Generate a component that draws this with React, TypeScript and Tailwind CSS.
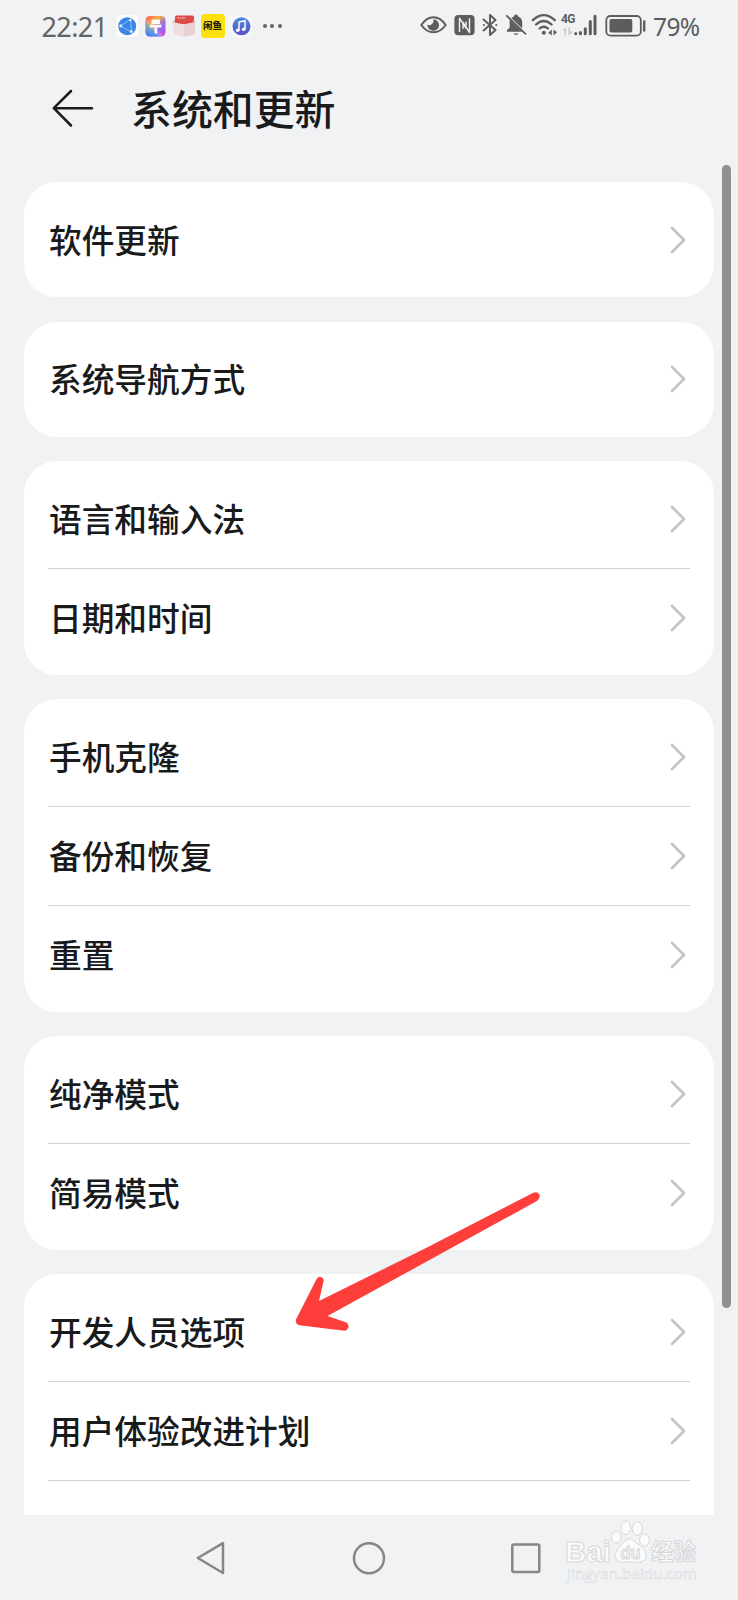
const groups = [
  ["软件更新"],
  ["系统导航方式"],
  ["语言和输入法", "日期和时间"],
  ["手机克隆", "备份和恢复", "重置"],
  ["纯净模式", "简易模式"],
  ["开发人员选项", "用户体验改进计划", ""],
];

function AppIcons() {
  return (
    <div className="flex items-center pt-[1px]">
      {/* globe */}
      <svg width="24" height="24" viewBox="0 0 24 24" className="ml-[7px]">
        <rect x="1" y="1" width="22" height="22" rx="5" fill="#fdfdfe" />
        <circle cx="12.2" cy="12.2" r="9" fill="#3b86e6" />
        <path d="M5.5 12 15.5 5.5 16.5 18ZM3.5 12h2M15.5 5.5 17 4M16.5 18l1.5 1.5" fill="none" stroke="#a9cdf7" strokeWidth="0.8" />
        <circle cx="5.8" cy="12" r="1.4" fill="#e8f2fd" />
        <circle cx="15.5" cy="6" r="1.2" fill="#e8f2fd" />
        <circle cx="16.3" cy="17.6" r="1.4" fill="#e8f2fd" />
      </svg>
      {/* themes */}
      <svg width="21" height="24" viewBox="0 0 21 24" className="ml-[6px]">
        <defs>
          <linearGradient id="warm" x1="0" y1="0" x2="1" y2="1">
            <stop offset="0" stopColor="#ff4f5e" />
            <stop offset="0.35" stopColor="#fbb03a" />
            <stop offset="0.65" stopColor="#8d6ef0" />
            <stop offset="1" stopColor="#e03fd8" />
          </linearGradient>
          <linearGradient id="cool" x1="0" y1="1" x2="0.9" y2="0.1">
            <stop offset="0" stopColor="#2a6cf5" />
            <stop offset="0.35" stopColor="#3fa8f8" stopOpacity="0.6" />
            <stop offset="0.55" stopColor="#fff" stopOpacity="0" />
          </linearGradient>
        </defs>
        <rect x="0.5" y="2" width="20" height="20.5" rx="4.5" fill="url(#warm)" />
        <rect x="0.5" y="2" width="20" height="20.5" rx="4.5" fill="url(#cool)" />
        <path d="M6.5 5.5h8.500v4.500H6.500ZM5 10.700h11.500v2.800H12.300v5.500q-1.400 1.500-2.800 0V13.500H5Z" fill="#fff" fillOpacity="0.94" />
      </svg>
      {/* parcel box */}
      <svg width="24" height="24" viewBox="0 0 24 24" className="ml-[6px]">
        <path d="M3 10V3q0-1.500 1.500-1.500h16Q22 1.500 22 3v7Z" fill="#db4a49" />
        <path d="M5.500 4h8" stroke="#f7b6b4" strokeWidth="1.400" strokeDasharray="1.500 0.800" />
        <path d="M0.500 8 12 10.500 23.500 8 22.500 20.500 12 22.500 1.500 20.500Z" fill="#efdede" />
        <path d="M12 10.500 23.500 8 22.500 20.500 12 22.500Z" fill="#e9d0d1" />
        <path d="M0.500 8 3 5.500V8.600Z M23.500 8 21.500 5.500V8.600Z" fill="#e2a5a5" />
      </svg>
      <div className="ml-[5px] flex h-[24px] w-[24px] items-center justify-center rounded-[4px] bg-[#fde10f]">
        <span className="whitespace-nowrap text-[9.500px] leading-none font-black text-[#26230c]">闲鱼</span>
      </div>
      {/* music */}
      <svg width="22" height="24" viewBox="0 0 22 24" className="ml-[5px]">
        <defs>
          <linearGradient id="note" x1="0" y1="0" x2="0" y2="1">
            <stop offset="0" stopColor="#4c8ae0" />
            <stop offset="1" stopColor="#5b50c8" />
          </linearGradient>
        </defs>
        <rect x="0" y="1.500" width="22" height="22" rx="5" fill="#f8f8fb" />
        <circle cx="11.500" cy="12.300" r="9" fill="url(#note)" />
        <path d="M9 16.500V8l6-1.300v8.500" fill="none" stroke="#fff" strokeWidth="1.500" />
        <circle cx="7.700" cy="16.300" r="1.800" fill="#fff" />
        <circle cx="13.700" cy="15.200" r="1.800" fill="#fff" />
      </svg>
      <div className="ml-[11px] flex gap-[3.500px]">
        <i className="size-[4px] rounded-full bg-[#636466]" />
        <i className="size-[4px] rounded-full bg-[#636466]" />
        <i className="size-[4px] rounded-full bg-[#636466]" />
      </div>
    </div>
  );
}

function SystemIcons() {
  return (
    <div className="flex items-center text-[#5c5d5f]">
      {/* eye comfort */}
      <svg width="27" height="24" viewBox="0 0 27 24" fill="none" stroke="currentColor">
        <path d="M1.300 12Q6.500 4.200 13.500 4.200T25.700 12Q20.500 19.300 13.500 19.300T1.300 12Z" strokeWidth="2" strokeLinejoin="round" />
        <path d="M13.500 6.200a5.800 5.800 0 1 1-6 5Q9 13.200 11.500 11.500T13.500 6.200Z" fill="currentColor" stroke="none" />
      </svg>
      {/* nfc */}
      <svg width="21" height="24" viewBox="0 0 21 24" className="ml-[7px]">
        <rect x="0.400" y="2" width="20.200" height="20.200" rx="4" fill="currentColor" />
        <path d="M5.500 19V5.200L12 15V8.500M15.500 5.200V19.500L9 9.500V16" fill="none" stroke="#f1f2f4" strokeWidth="1.400" strokeLinejoin="round" />
      </svg>
      {/* bluetooth */}
      <svg width="16" height="24" viewBox="0 0 16 24" className="ml-[7px]" fill="none" stroke="currentColor" strokeWidth="2" strokeLinejoin="round" strokeLinecap="round">
        <path d="M1.500 6.500 13.500 17 8 22V2l5.500 5L1.500 17.500" />
        <path d="M1.800 12h.1M14.200 12h.1" />
      </svg>
      {/* muted bell */}
      <svg width="22" height="24" viewBox="0 0 22 24" className="ml-[7px]">
        <path d="M4.500 6.200 17.200 18.800H2V17L4.800 14.400ZM6.300 4.900 8.800 3.600Q9.200 1.800 11 1.600 12.800 1.800 13.200 3.600 17.200 5.200 17.200 9.500V15.500Z" fill="currentColor" />
        <path d="M1.800 2.800 20.500 20.800" stroke="currentColor" strokeWidth="1.800" strokeLinecap="round" />
        <path d="M8.500 20.500h5q-2.500 3-5 0Z" fill="currentColor" />
      </svg>
      {/* wifi */}
      <svg width="27" height="24" viewBox="0 0 27 24" className="ml-[4px]" fill="none" stroke="currentColor" strokeWidth="2.300" strokeLinecap="round">
        <path d="M1.800 7.200Q12.800-3 23.800 7.200M5 11.500q7.800-7 15.600 0M8.600 15.500q4.200-3.600 8.400 0" />
        <circle cx="12.800" cy="19.800" r="2" fill="currentColor" stroke="none" />
        <path d="M20.800 16.500V22.500L17.300 19.700ZM22.500 16.500V22.500L26 19.300Z" fill="currentColor" stroke="none" />
      </svg>
      <div className="ml-[4px] flex h-[24px] w-[12px] flex-col items-center">
        <span className="font-['Roboto','Liberation_Sans',sans-serif] text-[12px] leading-[12px] font-bold tracking-[-0.600px]">4G</span>
        <svg width="12" height="9" viewBox="0 0 12 9" className="mt-[2px]" fill="#c5c6c8">
          <path d="M4 0.500V8.500H2.600V3.800H0.500ZM6.500 0.500V8.500L11 4.500H8V0.500Z" />
        </svg>
      </div>
      <svg width="24" height="24" viewBox="0 0 24 24" fill="none" stroke="currentColor" strokeWidth="3" strokeLinecap="round">
        <path d="M1.700 20.600v.1M6.400 19.500v1.200M11.300 15.700v5M16.300 8.500v12.200M21 3.200v17.500" />
      </svg>
      {/* battery */}
      <svg width="42" height="24" viewBox="0 0 42 24" className="ml-[6.500px]">
        <rect x="1.300" y="3" width="34.500" height="19.600" rx="4.200" fill="none" stroke="currentColor" strokeWidth="1.800" />
        <rect x="4.500" y="6" width="22.800" height="13.600" rx="1.800" fill="currentColor" />
        <path d="M39.200 8.500v9" stroke="currentColor" strokeWidth="2.400" strokeLinecap="round" />
      </svg>
      <span className="ml-[6.500px] w-[47px] whitespace-nowrap pt-[3px] font-['Noto_Sans',sans-serif] text-[24.500px] leading-[26px] tracking-[-0.600px]">79%</span>
    </div>
  );
}

function Chevron() {
  return (
    <svg width="16" height="28" viewBox="0 0 16 28" fill="none" stroke="#c3c4c5" strokeWidth="2.700" strokeLinecap="round" strokeLinejoin="round">
      <path d="M2 2 14 14 2 26" />
    </svg>
  );
}

function Watermark() {
  return (
    <svg width="134" height="70" viewBox="0 0 134 70" className="absolute top-[4px] left-[565px]" fill="#fafbfc" stroke="#d6d7d9" strokeWidth="1">
      <text x="0" y="42.500" fontFamily="Liberation Sans, sans-serif" fontWeight="700" fontSize="30" textLength="46" lengthAdjust="spacingAndGlyphs">Bai</text>
      <ellipse cx="51.300" cy="18.200" rx="4.900" ry="6.200" />
      <ellipse cx="60.700" cy="8.800" rx="4.900" ry="6.800" />
      <ellipse cx="72.300" cy="9.500" rx="5" ry="6.800" />
      <ellipse cx="79.500" cy="21" rx="4.900" ry="6.200" />
      <path d="M65.500 19.500Q60 20 55.500 26.500T50 35.500Q50.500 43.500 58 43.500Q65.500 42 72 43.500Q81 43.500 81.500 36Q80.500 31 76 27.500T65.500 19.500Z" />
      <text x="55.500" y="39.500" fontFamily="Liberation Sans, sans-serif" fontWeight="700" fontSize="18" textLength="20" lengthAdjust="spacingAndGlyphs" fill="#f3f4f6">du</text>
      <text x="86" y="41" fontFamily="Noto Sans CJK SC, sans-serif" fontWeight="700" fontSize="22.500" textLength="45">经验</text>
      <text x="2" y="60" fontFamily="Open Sans, sans-serif" fontSize="15" textLength="130" strokeWidth="0.500">jingyan.baidu.com</text>
    </svg>
  );
}

export default function App() {
  return (
    <div className="relative flex h-[1600px] w-[738px] flex-col overflow-hidden bg-[#f1f2f4] font-['Noto_Sans_CJK_SC',sans-serif] text-[#191a1b]">
      <header className="flex h-[50px] shrink-0 items-center justify-between pr-[38px] pl-[41.500px]">
        <div className="flex items-center">
          <span className="w-[66px] whitespace-nowrap pt-[3px] font-['Noto_Sans',sans-serif] text-[27px] leading-[28px] tracking-[-0.600px] text-[#636466]">22:21</span>
          <AppIcons />
        </div>
        <SystemIcons />
      </header>

      <div className="flex h-[132px] shrink-0 items-start pt-[30px] pl-[52px]">
        <svg width="42" height="56" viewBox="0 0 42 56" fill="none" stroke="#191a1b" strokeWidth="2.500" strokeLinecap="round" strokeLinejoin="round">
          <path d="M19 11 1.800 28.200 19 45.500M1.800 28.200H40" />
        </svg>
        <h1 className="ml-[37px] text-[40.900px] leading-[56px] font-medium">系统和更新</h1>
      </div>

      <main className="flex h-[1332.500px] shrink-0 flex-col gap-[24.500px] overflow-hidden px-[24px]">
        {groups.map((rows) => (
          <section key={rows[0]} className="shrink-0 rounded-[33px] bg-white px-[24px] py-[8.250px]">
            {rows.map((label, i) => (
              <div
                key={i}
                className={`flex h-[98.600px] items-center justify-between border-[#d2d3d4] pr-[4px] ${i > 0 ? "border-t" : ""}`}
              >
                <span className="pb-[1.500px] pl-[1px] text-[32.700px] leading-[48px] font-medium">{label}</span>
                {label && <Chevron />}
              </div>
            ))}
          </section>
        ))}
      </main>

      <nav className="relative h-[85.500px] shrink-0">
        <div className="flex items-center pt-[27px] pl-[195px]">
          <svg width="32" height="34" viewBox="0 0 32 34" fill="none" stroke="#858687" strokeWidth="2.500" strokeLinejoin="round">
            <path d="M2.800 16 28 1.200V31Z" />
          </svg>
          <svg width="34" height="34" viewBox="0 0 34 34" className="ml-[125px]" fill="none" stroke="#858687" strokeWidth="2.500">
            <circle cx="17" cy="16.200" r="15" />
          </svg>
          <svg width="32" height="34" viewBox="0 0 32 34" className="ml-[124px]" fill="none" stroke="#858687" strokeWidth="2.500">
            <rect x="2.300" y="2.500" width="27" height="27.500" rx="1.500" />
          </svg>
        </div>
        <Watermark />
      </nav>

      {/* scroll thumb */}
      <div className="absolute top-[165px] right-[7px] h-[1143px] w-[9px] rounded-full bg-[#8f9091]" />

      {/* pointer to developer options */}
      <svg width="248" height="144" viewBox="0 0 248 144" className="absolute top-[1190px] left-[294px]" fill="#fe3e3b">
        <path d="M239.800 2.600Q243.500 1.300 245.200 4.200T243.300 10.800L33.500 126 52.500 132.500Q55.500 135 54.200 138T50.500 140.700L5 135.300Q1 133.500 2 129.500L22.300 89.500Q24 86 27 87T29.700 90.500L25 111 130 59Z" />
      </svg>
    </div>
  );
}
